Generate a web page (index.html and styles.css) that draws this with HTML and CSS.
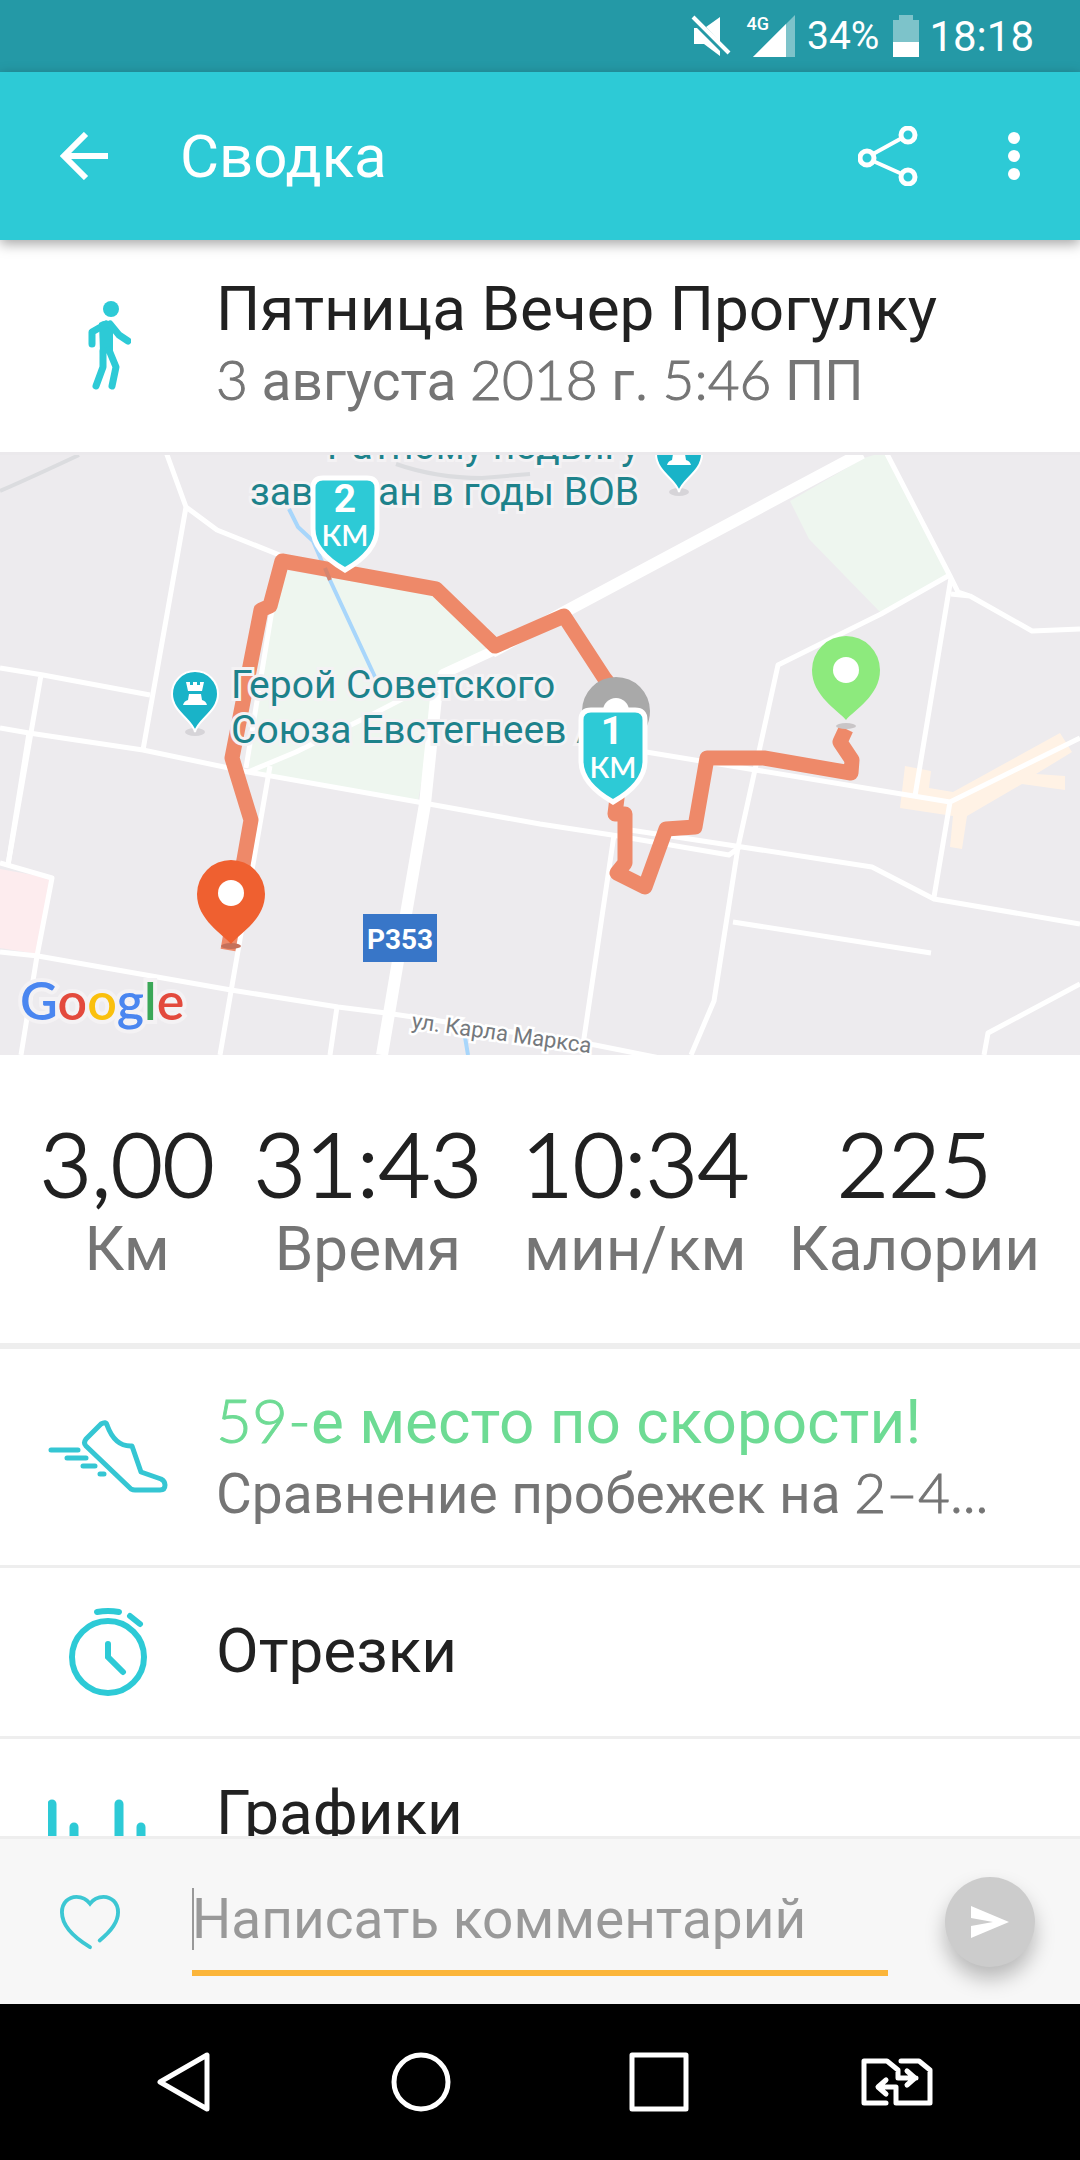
FILE: index.html
```html
<!DOCTYPE html>
<html lang="ru">
<head>
    <meta charset="UTF-8">
    <meta name="viewport" content="width=device-width, initial-scale=1.0">
    <title>Сводка</title>
    <link rel="stylesheet" href="styles.css">
</head>
<body>
    <div class="statusbar">
        <svg class="status-mute" viewBox="0 0 40 42" width="40" height="42">
            <path d="M3 13h3l23 23v5L13 29H3zM15 12L29 2v25z" fill="#fff"/>
            <path d="M2 2l36 36" stroke="#fff" stroke-width="4"/>
        </svg>
        <div class="network">
            <span class="network-type">4G</span>
            <svg viewBox="0 0 42 42" width="42" height="42">
                <path d="M42 0v42H0z" fill="#7dc3ca"/>
                <path d="M33 9v33H0z" fill="#fff"/>
            </svg>
        </div>
        <span class="percent">34%</span>
        <svg viewBox="0 0 26 42" width="26" height="42">
            <path d="M6 0h14v5h6v22H0V5h6z" fill="#7dc3ca"/>
            <path d="M0 27h26v15H0z" fill="#fff"/>
        </svg>
        <span class="clock">18:18</span>
    </div>

    <header class="appbar">
        <button class="icon-btn" aria-label="Назад">
            <svg viewBox="0 0 48 48" width="48" height="48" fill="none" stroke="#fff" stroke-width="6">
                <path d="M48 24H5M26 2L4 24l22 22"/>
            </svg>
        </button>
        <h1>Сводка</h1>
        <button class="icon-btn" aria-label="Поделиться">
            <svg viewBox="0 0 60 60" width="60" height="60" fill="none" stroke="#fff" stroke-width="5">
                <circle cx="9" cy="32" r="7"/>
                <circle cx="50" cy="9" r="7"/>
                <circle cx="50" cy="51" r="7"/>
                <path d="M15 28l29-16M15 35l29 13" stroke-width="4"/>
            </svg>
        </button>
        <button class="icon-btn" aria-label="Ещё">
            <svg viewBox="0 0 12 48" width="12" height="48" fill="#fff">
                <circle cx="6" cy="6" r="6"/>
                <circle cx="6" cy="24" r="6"/>
                <circle cx="6" cy="42" r="6"/>
            </svg>
        </button>
    </header>

    <main class="content">
        <section class="row summary">
            <div class="row-icon">
                <svg viewBox="0 0 46 90" width="46" height="90" fill="none" stroke="#2dcad6" stroke-linecap="round" stroke-linejoin="round">
                    <circle cx="26" cy="8" r="8" fill="#2dcad6" stroke="none"/>
                    <path d="M14 22q8-5 14 1v29H15z" fill="#2dcad6" stroke="none"/>
                    <path d="M21 23L7 31v12M25 23l9 11 9 6" stroke-width="7"/>
                    <path d="M18 50v16l-7 19M24 49l7 17-4 19" stroke-width="7"/>
                </svg>
            </div>
            <div class="row-text">
                <h2>Пятница Вечер Прогулку</h2>
                <p><span class="num">3</span> августа <span class="num">2018</span> г. <span class="num">5:46</span> ПП</p>
            </div>
        </section>

        <svg class="map" viewBox="0 0 1080 603" role="img" aria-label="Карта маршрута">
            <defs>
                <path id="pin" d="M0 50C-8 40-34 26-34 0a34 34 0 0 1 68 0C34 26 8 40 0 50z"/>
                <path id="shield" d="M-22-46h44q10 0 10 10v41C32 24 14 38 0 46-14 38-32 24-32 5v-41q0-10 10-10z"/>
                <g id="poi">
                    <ellipse cx="0" cy="38" rx="10" ry="4" fill="#d6d4d8"/>
                    <path d="M0 38C-2 26-23 18-23 0a23 23 0 0 1 46 0C23 18 2 26 0 38z" fill="#19b3c8" stroke="#fff" stroke-width="2"/>
                    <path d="M-9-12h4v3h3v-3h4v3h3v-3h4l-2 9H-7zM-6 0H6l1 6q4 1 5 5h-24q1-4 5-5z" fill="#fff"/>
                </g>
            </defs>

            <!-- areas -->
            <path fill="#eef6ef" d="M286 118l151 26 55 54-48 19-12 48-14 85-170-30 24-154zM884 0l64 124-67 37-72-74-19-38 74-43z"/>
            <path fill="#fdecee" d="M0 417l50 9-12 76-38-6z"/>
            <path fill="#fff2e5" d="M905 314l26 5-2 17 24 4 107-59 12 19-36 22 29 2v14l-43-6-55 32-5 33-12-2 3-31-53-8z"/>

            <!-- roads -->
            <g fill="none" stroke="#dbdcdf" stroke-width="4">
                <path d="M0 39Q30 26 79 3M396 12q40 14 86 14l48-4"/>
            </g>
            <g fill="none" stroke="#fff" stroke-width="5" stroke-linejoin="round">
                <path d="M166 0l20 55 31 23 65 26M186 55l-43 243"/>
                <path d="M0 216l43 7 107 20M41 223L8 413"/>
                <path d="M0 276l29 5 114 17 105 22 170 30 122 22 72 11 117 20 12-9"/>
                <path d="M29 281L8 413M0 411l52 15-15 78-16 99"/>
                <path d="M0 500l38 4 193 34 107 17 48 6 94 14 115 18 65 13"/>
                <path d="M270 314l-50 289M337 555l-7 48M272 158l-26 158"/>
                <path d="M248 320l48-20 79-39 62-32"/>
                <path d="M886 0l64 124 8 16 12 4 62 35 48-2M951 142l19 2"/>
                <path d="M948 124l-67 38-103 51-40 182-24 154-23 54"/>
                <path d="M951 126l-36 218M640 299l310 51 130-64M950 350l-16 95"/>
                <path d="M630 378l99 15 143 22 62 32 146 25M733 470l198 31"/>
                <path d="M614 383l-31 210M1080 532l-92 49-4 22"/>
                <path d="M436 137l50 40 9 18" stroke-width="4"/>
            </g>
            <g fill="none" stroke="#fff" stroke-linejoin="round">
                <path d="M862 1L568 158l-76 42" stroke-width="12"/>
                <path d="M495 198l-52 24-6 19" stroke-width="10"/>
                <path d="M437 236l-12 116-19 110-24 141" stroke-width="12"/>
            </g>
            <path d="M289 57l9 18 15 14 16 37 46 99M465 585l3 18" fill="none" stroke="#a8d6fb" stroke-width="4"/>

            <!-- track -->
            <path d="M846 277l-6 13 12 18-1 13-87-15h-57l-12 69-29 2-21 58-28-14 8-10v-49h-10l2-16-1-105-11-14-41-63-69 30-59-57-154-28-12 45-9 4-29 148 19 62-23 130" fill="none" stroke="#ee8969" stroke-width="15" stroke-linejoin="round"/>
            <path d="M325 116l5 12" stroke="#d5856f" stroke-width="4"/>

            <!-- labels -->
            <g class="map-label">
                <text x="327" y="7">Ратному подвигу</text>
                <text x="250" y="53">зав</text>
                <text x="378" y="53">ан в годы ВОВ</text>
                <text x="231" y="246">Герой Советского</text>
                <text x="231" y="291">Союза Евстегнеев А</text>
            </g>
            <text class="street" x="411" y="576" transform="rotate(8 411 576)">ул. Карла Маркса</text>
            <rect x="363" y="462" width="74" height="48" fill="#3876c8"/>
            <text class="road-number" x="400" y="497">Р353</text>
            <use href="#poi" x="195" y="242"/>
            <use href="#poi" x="679" y="2"/>

            <!-- markers -->
            <ellipse cx="846" cy="274" rx="10" ry="3" fill="#c9c5c7"/>
            <use href="#pin" x="846" y="218" fill="#8dea7d"/>
            <circle cx="846" cy="218" r="13" fill="#fff"/>
            <ellipse cx="231" cy="494" rx="10" ry="3" fill="#c4705a"/>
            <use href="#pin" x="231" y="442" fill="#ef6030"/>
            <circle cx="231" cy="441" r="13" fill="#fff"/>
            <use href="#pin" x="616" y="259" fill="#a9a9a9"/>
            <circle cx="616" cy="259" r="13" fill="#fff"/>
            <g class="km">
                <use href="#shield" x="613" y="304"/>
                <text class="km-number" x="612" y="292">1</text>
                <text class="km-unit" x="613" y="326">КМ</text>
                <use href="#shield" x="345" y="72"/>
                <text class="km-number" x="345" y="60">2</text>
                <text class="km-unit" x="345" y="94">КМ</text>
            </g>
            <text class="google" x="20" y="568"><tspan fill="#4a86f0">G</tspan><tspan fill="#e34a3d">o</tspan><tspan fill="#fac00d">o</tspan><tspan fill="#4a86f0">g</tspan><tspan fill="#3aa757">l</tspan><tspan fill="#e34a3d">e</tspan></text>
            <rect width="1080" height="3" fill="#ebe9ec"/>
        </svg>

        <section class="stats">
            <div class="stat"><strong>3,00</strong><span>Км</span></div>
            <div class="stat"><strong>31:43</strong><span>Время</span></div>
            <div class="stat"><strong>10:34</strong><span>мин/км</span></div>
            <div class="stat"><strong>225</strong><span>Калории</span></div>
        </section>

        <a class="row place" href="#place">
            <span class="row-icon">
                <svg viewBox="0 0 120 74" width="120" height="74" fill="none" stroke="#35c6d3" stroke-width="5" stroke-linecap="round" stroke-linejoin="round">
                    <path d="M53 4L38 19q-3 4 0 7l45 43q2 1 4 1h25q5 0 5-5 0-4-4-6l-20-7-9-26q-17 1-25-21-1-4-6-1z"/>
                    <path d="M3 30h27M19 38h19M35 46h12M52 54h4"/>
                </svg>
            </span>
            <span class="row-text">
                <span class="place-title"><span class="num">59-</span>е место по скорости!</span>
                <span class="place-note">Сравнение пробежек на <span class="num">2–4...</span></span>
            </span>
        </a>
        <a class="row item" href="#splits">
            <span class="row-icon">
                <svg viewBox="0 0 78 90" width="78" height="90" fill="none" stroke="#2dcad6" stroke-width="6" stroke-linecap="round">
                    <circle cx="39" cy="50" r="36"/>
                    <path d="M28 5q11-2 22 0M61 9l10 8M39 37v13l15 15"/>
                </svg>
            </span>
            <span class="row-text">Отрезки</span>
        </a>
        <a class="row item charts" href="#charts">
            <span class="row-icon">
                <svg viewBox="0 0 120 96" width="120" height="96" fill="none" stroke="#2dcad6" stroke-width="9" stroke-linecap="round">
                    <path d="M4 5v87M26 28v64M49 50v42M71 5v87M93 28v64M115 50v42"/>
                </svg>
            </span>
            <span class="row-text">Графики</span>
        </a>
    </main>

    <form class="comment">
        <button class="icon-btn like" type="button" aria-label="Нравится">
            <svg viewBox="0 0 62 56" width="60" height="56" fill="none" stroke="#3cc7d3" stroke-width="4" stroke-linecap="round">
                <path d="M41 47c10-8 19-18 19-29C60 8 53 2 45 2c-6 0-11 3-14 7C28 5 23 2 17 2 9 2 2 8 2 18c0 14 14 27 29 36"/>
            </svg>
        </button>
        <input type="text" placeholder="Написать комментарий" aria-label="Написать комментарий">
        <button class="send" type="button" aria-label="Отправить">
            <svg viewBox="0 0 38 32" width="38" height="32" fill="#fff">
                <path d="M0 0l38 16L0 32V20l22-4L0 12z"/>
            </svg>
        </button>
    </form>

    <nav class="navbar">
        <button aria-label="Назад">
            <svg viewBox="0 0 60 60" width="60" height="60"><path d="M54 3v54L7 30z"/></svg>
        </button>
        <button aria-label="Домой">
            <svg viewBox="0 0 60 60" width="60" height="60"><circle cx="30" cy="30" r="27"/></svg>
        </button>
        <button aria-label="Последние">
            <svg viewBox="0 0 60 60" width="60" height="60"><path d="M3 3h54v54H3z"/></svg>
        </button>
        <button aria-label="Сменить SIM">
            <svg viewBox="0 0 72 48" width="72" height="48">
                <path d="M25 45H3V3h23l11 9v8h18M46 13l8 7-8 7M40 3h18l11 9v33H35V29H18M25 22l-8 7 8 7"/>
            </svg>
        </button>
    </nav>
</body>
</html>
```
FILE: styles.css
```css
* {
    box-sizing: border-box;
}
body {
    display: flex;
    flex-direction: column;
    height: 100vh;
    margin: 0;
    background-color: #fff;
    color: #212121;
    font-family: Roboto, "Noto Sans", sans-serif;
}
h1, h2, p {
    margin: 0;
    font-weight: 400;
}
button {
    padding: 0;
    background: none;
    border: none;
    cursor: pointer;
}
a {
    color: inherit;
    text-decoration: none;
}
svg {
    display: block;
    flex-shrink: 0;
}
.num {
    font-family: Lato, Roboto, sans-serif;
    font-weight: 300;
    -webkit-text-stroke: 1px currentColor;
}

/* status bar */
.statusbar {
    display: flex;
    flex: none;
    justify-content: flex-end;
    align-items: center;
    gap: 10px;
    height: 72px;
    padding-right: 46px;
    background-color: #2499a6;
    color: #fff;
}
.status-mute {
    margin-right: 6px;
}
.network {
    display: flex;
    margin-right: 2px;
}
.network-type {
    margin-right: -16px;
    font-size: 18px;
    font-weight: 500;
    line-height: 18px;
}
.percent {
    margin-right: 4px;
    font-size: 39px;
}
.clock {
    font-size: 42px;
}

/* app bar */
.appbar {
    position: relative;
    display: flex;
    flex: none;
    align-items: center;
    height: 168px;
    padding: 0 60px;
    background-color: #2dcad6;
    box-shadow: 0 4px 12px rgba(0, 0, 0, 0.35);
    color: #fff;
}
.appbar h1 {
    flex: 1;
    margin-left: 72px;
    font-size: 60px;
}
.appbar .icon-btn + .icon-btn {
    margin-left: 90px;
}

.content {
    flex: 1;
    min-height: 0;
    overflow: hidden;
}
.row {
    display: flex;
    align-items: center;
    border-bottom: 3px solid #eee;
}
.row-icon {
    display: flex;
    flex: none;
    justify-content: center;
    width: 216px;
}
.row-text {
    min-width: 0;
    padding-bottom: 4px;
    white-space: nowrap;
}
.summary {
    height: 212px;
    border-bottom: none;
}
.summary h2 {
    font-size: 62px;
    line-height: 72px;
}
.summary p {
    color: #757575;
    font-size: 55px;
    line-height: 68px;
}

/* map */
.map {
    width: 100%;
    height: auto;
    background-color: #edebee;
}
.map-label {
    fill: #1d828b;
    stroke: #f4f2f4;
    stroke-width: 6px;
    paint-order: stroke;
    font-size: 39px;
}
.street {
    fill: #75797d;
    stroke: #fff;
    stroke-width: 5px;
    paint-order: stroke;
    font-size: 22px;
}
.road-number {
    fill: #fff;
    font-size: 28px;
    font-weight: 700;
    text-anchor: middle;
}
.km {
    fill: #2dcad6;
    stroke: #fff;
    stroke-width: 5px;
    text-anchor: middle;
}
.km text {
    fill: #fff;
    stroke: none;
}
.km-number {
    font-size: 39px;
    font-weight: 700;
}
.km-unit {
    font-family: Lato, Roboto, sans-serif;
    font-size: 29px;
    font-weight: 600;
}
.google {
    stroke: #f4f2f4;
    stroke-width: 8px;
    paint-order: stroke;
    font-family: Lato, sans-serif;
    font-size: 52px;
    font-weight: 600;
}

/* stats */
.stats {
    display: flex;
    justify-content: space-between;
    height: 294px;
    padding: 60px 40px 0;
    border-bottom: 6px solid #eee;
}
.stat {
    text-align: center;
}
.stat strong, .stat span {
    display: block;
}
.stat strong {
    font-family: Lato, Roboto, sans-serif;
    font-size: 89px;
    font-weight: 300;
    line-height: 96px;
    -webkit-text-stroke: 2px currentColor;
}
.stat span {
    color: #757575;
    font-size: 62px;
    line-height: 76px;
}

/* list */
.place {
    height: 219px;
}
.place-title, .place-note {
    display: block;
}
.place-title {
    color: #6edb94;
    font-size: 62px;
    line-height: 72px;
}
.place-note {
    color: #757575;
    font-size: 55px;
    line-height: 68px;
}
.item {
    height: 171px;
    font-size: 62px;
}
.item.charts {
    height: 219px;
}
.charts .row-text {
    padding-bottom: 70px;
}

/* comment box */
.comment {
    display: flex;
    flex: none;
    align-items: center;
    height: 168px;
    padding: 0 45px 0 60px;
    background-color: #f7f7f7;
    border-top: 3px solid #eee;
}
.comment input {
    flex: 1;
    min-width: 0;
    height: 108px;
    margin: 0 57px 0 72px;
    padding: 0;
    background: none;
    border: none;
    border-bottom: 6px solid #fbb53a;
    outline: none;
    color: #212121;
    font-family: inherit;
    font-size: 55px;
}
/* caret of the empty field */
.comment input:placeholder-shown {
    background: linear-gradient(#999, #999) left center / 2px 62px no-repeat;
}
.comment input::placeholder {
    color: #999;
    opacity: 1;
}
.send {
    display: flex;
    justify-content: center;
    align-items: center;
    width: 90px;
    height: 90px;
    background-color: #ccc;
    border-radius: 50%;
    box-shadow: 0 12px 20px rgba(0, 0, 0, 0.25);
}

/* system navigation */
.navbar {
    display: flex;
    flex: none;
    justify-content: space-between;
    align-items: center;
    height: 156px;
    padding: 0 147px;
    background-color: #000;
}
.navbar button {
    display: flex;
    justify-content: center;
    width: 72px;
}
.navbar svg {
    fill: none;
    stroke: #fff;
    stroke-width: 5px;
    stroke-linecap: round;
    stroke-linejoin: round;
}
```
